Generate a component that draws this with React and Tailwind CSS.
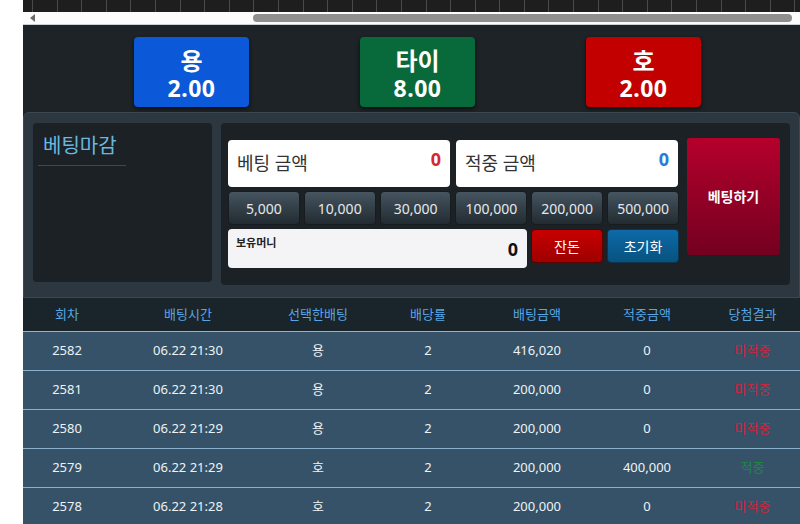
import React from 'react'

const font = { fontFamily: '"Noto Sans", "Noto Sans CJK KR", sans-serif' }

const odds = [
  { label: '용', value: '2.00', color: 'bg-[#0b58d8]' },
  { label: '타이', value: '8.00', color: 'bg-[#08693a]' },
  { label: '호', value: '2.00', color: 'bg-[#c20000]' },
]

const chips = ['5,000', '10,000', '30,000', '100,000', '200,000', '500,000']

const rows = [
  ['2582', '06.22 21:30', '용', '2', '416,020', '0', false],
  ['2581', '06.22 21:30', '용', '2', '200,000', '0', false],
  ['2580', '06.22 21:29', '용', '2', '200,000', '0', false],
  ['2579', '06.22 21:29', '호', '2', '200,000', '400,000', true],
  ['2578', '06.22 21:28', '호', '2', '200,000', '0', false],
]

const headers = ['회차', '배팅시간', '선택한배팅', '배당률', '배팅금액', '적중금액', '당첨결과']
const cols = 'grid grid-cols-[88px_154px_106px_114px_104px_116px_95px]'

function TopStrip() {
  return (
    <div className="flex h-[12px] overflow-hidden bg-[#1e1e1e]">
      <div className="w-[10px] shrink-0 border-r border-[#4a4a4a]" />
      {Array.from({ length: 32 }).map((_, i) => (
        <div key={i} className="w-[24.6px] shrink-0 border-r border-[#4a4a4a]" />
      ))}
    </div>
  )
}

function Scrollbar() {
  return (
    <div className="flex h-[13px] items-center border-b border-[#cfcfcf] bg-[#fcfcfc]">
      <div className="ml-[7px] h-0 w-0 border-y-[4px] border-r-[5px] border-y-transparent border-r-[#6b6b6b]" />
      <div className="ml-[218px] h-[8px] w-[539px] rounded-full bg-[#8f8f8f]" />
    </div>
  )
}

export default function App() {
  return (
    <div className="h-[524px] w-[800px] overflow-hidden bg-white" style={font}>
      <div className="ml-[23px]">
        <TopStrip />
        <Scrollbar />
        <div className="bg-[#1d2326]">
          <div className="flex h-[87px] items-start pt-[12px]">
            {odds.map((o) => (
              <div
                key={o.label}
                className={`${o.color} ml-[111px] flex h-[70px] w-[115px] flex-col items-center justify-center rounded-[4px] pt-[4px] text-white shadow-[0_2px_4px_rgba(0,0,0,0.6)]`}
              >
                <div className="text-[24px] font-bold leading-[28px]">{o.label}</div>
                <div className="text-[23px] font-bold leading-[26px] tracking-[0.5px]">{o.value}</div>
              </div>
            ))}
          </div>

          <div className="flex h-[186px] gap-[9px] rounded-t-[6px] border border-[#3b4852] bg-[#2c3740] px-[9px] pt-[10px]">
            <div className="h-[159px] w-[179px] rounded-[4px] bg-[#1b2125] px-[5px] pt-[10px]">
              <div className="w-[88px] border-b border-[#3b4a52] pb-[6px] pl-[5px] text-[20px] leading-[26px] text-[#68b9e0]">
                베팅마감
              </div>
            </div>

            <div className="flex h-[162px] w-[569px] gap-[8px] rounded-[4px] bg-[#1b2125] pl-[7px] pt-[17px]">
              <div className="flex w-[451px] flex-col gap-[4px]">
                <div className="flex gap-[6px]">
                  <div className="relative flex h-[47px] w-[222px] items-center rounded-[4px] bg-white pl-[9px]">
                    <span className="text-[18px] text-[#333]">베팅 금액</span>
                    <span className="absolute right-[9px] top-[6px] text-[18px] font-bold text-[#d9262b]">0</span>
                  </div>
                  <div className="relative flex h-[47px] w-[222px] items-center rounded-[4px] bg-white pl-[9px]">
                    <span className="text-[18px] text-[#333]">적중 금액</span>
                    <span className="absolute right-[9px] top-[6px] text-[18px] font-bold text-[#2a7ad6]">0</span>
                  </div>
                </div>
                <div className="flex gap-[4px]">
                  {chips.map((c) => (
                    <div
                      key={c}
                      className="flex h-[34px] w-[72px] items-center justify-center rounded-[4px] border border-[#161c20] bg-gradient-to-b from-[#465560] to-[#222b31] text-[14px] text-[#e4e8ea]"
                    >
                      {c}
                    </div>
                  ))}
                </div>
                <div className="flex gap-[4px]">
                  <div className="relative h-[39px] w-[299px] rounded-[4px] bg-[#f4f4f6]">
                    <span className="absolute left-[8px] top-[6px] text-[11px] font-bold text-[#222]">보유머니</span>
                    <span className="absolute right-[9px] top-[7px] text-[18px] font-bold text-[#111]">0</span>
                  </div>
                  <div className="flex h-[34px] w-[72px] items-center justify-center rounded-[4px] border border-[#5a0000] bg-gradient-to-b from-[#c80000] to-[#9e0000] text-[14px] text-white">
                    잔돈
                  </div>
                  <div className="flex h-[34px] w-[72px] items-center justify-center rounded-[4px] border border-[#0d3550] bg-gradient-to-b from-[#0d6aa8] to-[#08527f] text-[14px] text-white">
                    초기화
                  </div>
                </div>
              </div>
              <div className="mt-[-2px] flex h-[117px] w-[93px] items-center justify-center rounded-[3px] bg-gradient-to-b from-[#b5002c] to-[#740020] text-[14px] font-bold text-white">
                베팅하기
              </div>
            </div>
          </div>
        </div>

        <div className={`${cols} h-[34px] items-center border-b border-[#8fb4d0] bg-[#1a242b] text-center text-[13px] text-[#57a6e6]`}>
          {headers.map((h) => (
            <div key={h}>{h}</div>
          ))}
        </div>
        {rows.map((r) => (
          <div
            key={r[0]}
            className={`${cols} h-[39px] items-center border-b border-[#8ab0cc] bg-[#355268] text-center text-[13px] text-[#eef2f5]`}
          >
            <div>{r[0]}</div>
            <div>{r[1]}</div>
            <div>{r[2]}</div>
            <div>{r[3]}</div>
            <div>{r[4]}</div>
            <div>{r[5]}</div>
            <div className={r[6] ? 'text-[#1e8a3c]' : 'text-[#c9293d]'}>{r[6] ? '적중' : '미적중'}</div>
          </div>
        ))}
      </div>
    </div>
  )
}
